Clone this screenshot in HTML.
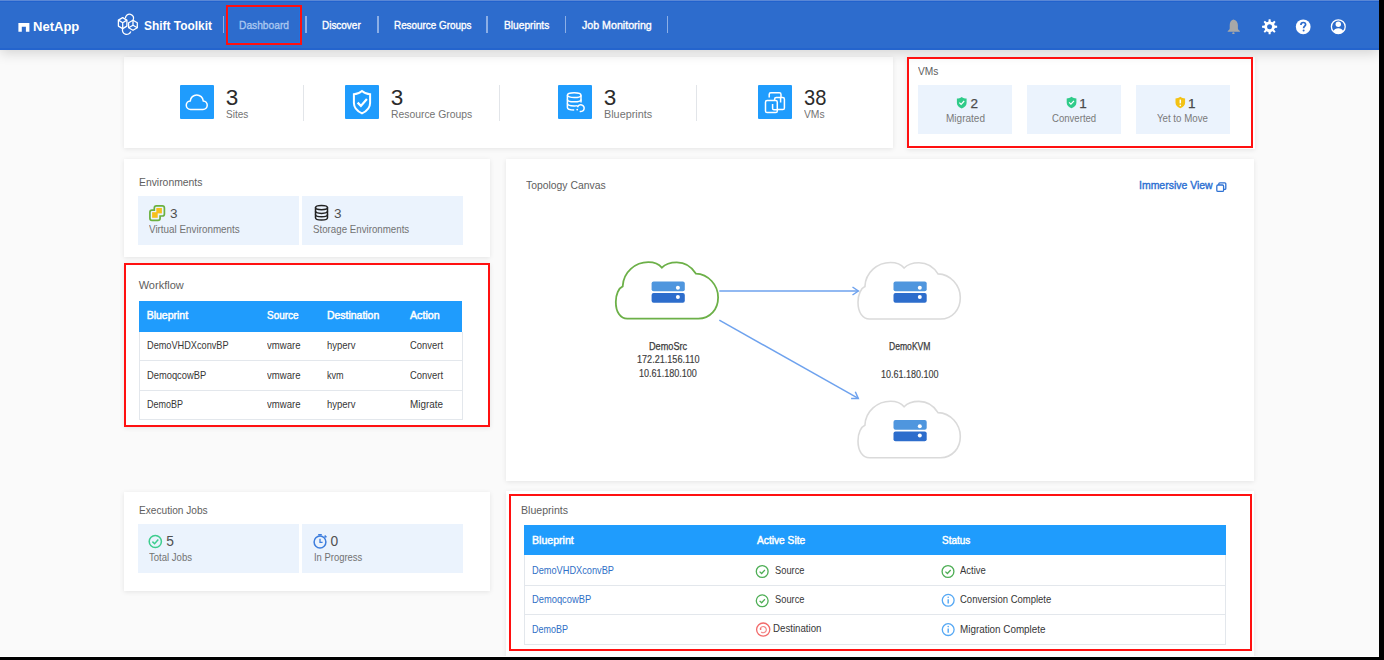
<!DOCTYPE html>
<html><head><meta charset="utf-8">
<style>
*{box-sizing:border-box;margin:0;padding:0}
html,body{width:1384px;height:660px;overflow:hidden;background:#000;font-family:"Liberation Sans",sans-serif}
#page{position:absolute;left:0;top:0;width:1379px;height:657px;background:#fafafa;overflow:hidden}
.tx{position:absolute;white-space:nowrap;transform-origin:0 0}
#nav{position:absolute;left:0;top:0;width:1379px;height:50px;background:#2d6ccd;box-shadow:inset 0 -2px 0 #2464cd,0 3px 12px rgba(0,0,0,.16)}
#nav .top{position:absolute;left:0;top:0;width:100%;height:1px;background:#5a87d5;box-shadow:0 1px 0 #2262cd}
.sep{position:absolute;top:16px;width:1.5px;height:17px;background:#8cafe6}
.redbox{position:absolute;border:2px solid #ff1010}
.card{position:absolute;background:#fff;box-shadow:0 1px 5px rgba(0,0,0,.09)}
.sq{position:absolute;width:34px;height:34px;background:#1f9cfd;border-radius:1px}
.sq svg{position:absolute;left:0;top:0}
.vdiv{position:absolute;width:1px;background:#e2e5e9}
.lbox{position:absolute;background:#ebf3fd}
.tbl{position:absolute;border:1px solid #e3e7ec;border-top:none;background:#fff}
.thead{position:absolute;background:#1f9cfd}
.rowb{position:absolute;height:1px;background:#e3e7ec}
svg{position:absolute;overflow:visible}
</style></head><body>
<div id="page">
  <!-- ============ CARDS ============ -->
  <div class="card" style="left:124px;top:57px;width:769px;height:91px"></div>
  <div class="card" style="left:906.5px;top:57px;width:348.5px;height:91.5px"></div>
  <div class="card" style="left:124px;top:159px;width:366px;height:98px"></div>
  <div class="card" style="left:124px;top:263px;width:366px;height:164px"></div>
  <div class="card" style="left:506px;top:159px;width:748px;height:322px"></div>
  <div class="card" style="left:124px;top:492px;width:366px;height:99px"></div>
  <div class="card" style="left:506px;top:491px;width:748px;height:170px"></div>

  <!-- ============ NAV ============ -->
  <div id="nav">
    <div class="top"></div>
    <!-- NetApp logo mark -->
    <svg style="left:0;top:0" width="40" height="50"><path d="M18.4 23 H29.4 V31.7 H25.9 V26.8 H21.8 V31.7 H18.4 Z" fill="#fff"/></svg>
    <!-- Shift toolkit logo -->
    <svg style="left:0;top:0" width="140" height="50" fill="none" stroke="#fff" stroke-width="1.3" stroke-linejoin="round">
      <path d="M125.4 18.2 A4.1 4.1 0 1 1 133.1 20.2"/>
      <path d="M122.7 28.6 A4.3 4.3 0 1 0 130.8 31.6"/>
      <path d="M122.7 17.6 L126.9 20.1 V26.1 L122.7 28.6 L118.4 26.1 V20.1 Z"/>
      <path d="M118.4 20.1 L122.7 22.7 L126.9 20.1 M122.7 22.7 V28.6"/>
      <path d="M133 20.2 L137.3 22.7 V27.8 L133 30.3 L128.6 27.8 V22.7 Z"/>
      <path d="M133 20.2 V25.3 L128.6 27.8 M133 25.3 L137.3 27.8"/>
    </svg>
    <div class="sep" style="left:222.8px"></div>
    <div class="redbox" style="left:226px;top:5px;width:76px;height:40px;box-shadow:inset 0 0 0 1px rgba(20,120,240,.55)"></div>
    <div class="sep" style="left:305.2px"></div>
    <div class="sep" style="left:377.4px"></div>
    <div class="sep" style="left:486.3px"></div>
    <div class="sep" style="left:564.8px"></div>
    <div class="sep" style="left:666.8px"></div>
    <!-- bell -->
    <svg style="left:0;top:0" width="1379" height="50">
      <path d="M1233.4 19.5 C1230.9 20.3 1229.7 22.3 1229.7 25.2 V28.4 C1229.7 29.5 1228.4 30.2 1227.7 30.9 V31.7 H1239.9 V30.9 C1239.2 30.2 1237.9 29.5 1237.9 28.4 V25.2 C1237.9 22.3 1236.3 20.3 1233.4 19.5 Z" fill="#a8a8a8"/>
      <ellipse cx="1233.4" cy="33.2" rx="1.2" ry="0.9" fill="#a8a8a8"/>
      <!-- gear -->
      <path d="M1267.69 22.18 L1268.39 21.95 L1268.67 19.26 L1270.53 19.26 L1270.81 21.95 L1271.51 22.18 L1272.18 22.51 L1274.28 20.81 L1275.59 22.12 L1273.89 24.22 L1274.22 24.89 L1274.45 25.59 L1277.14 25.87 L1277.14 27.73 L1274.45 28.01 L1274.22 28.71 L1273.89 29.38 L1275.59 31.48 L1274.28 32.79 L1272.18 31.09 L1271.51 31.42 L1270.81 31.65 L1270.53 34.34 L1268.67 34.34 L1268.39 31.65 L1267.69 31.42 L1267.02 31.09 L1264.92 32.79 L1263.61 31.48 L1265.31 29.38 L1264.98 28.71 L1264.75 28.01 L1262.06 27.73 L1262.06 25.87 L1264.75 25.59 L1264.98 24.89 L1265.31 24.22 L1263.61 22.12 L1264.92 20.81 L1267.02 22.51 Z" fill="#fff"/>
      <circle cx="1269.6" cy="26.8" r="5.2" fill="#fff"/>
      <circle cx="1269.6" cy="26.8" r="2.5" fill="#2d6ccd"/>
      <!-- help -->
      <circle cx="1303.2" cy="26.8" r="7.4" fill="#fff"/>
      <path d="M1300.9 24.9 C1300.9 23.4 1301.9 22.5 1303.3 22.5 C1304.7 22.5 1305.6 23.4 1305.6 24.6 C1305.6 26.2 1303.6 26.3 1303.6 28.2" fill="none" stroke="#2d6ccd" stroke-width="1.7"/>
      <circle cx="1303.6" cy="30.6" r="1" fill="#2d6ccd"/>
      <!-- user -->
      <circle cx="1338.3" cy="26.7" r="6.9" fill="none" stroke="#fff" stroke-width="1.3"/>
      <circle cx="1338.3" cy="24.3" r="2.7" fill="#fff"/>
      <path d="M1333.2 31.3 C1334.2 29.2 1336 28.3 1338.3 28.3 C1340.6 28.3 1342.4 29.2 1343.4 31.3 C1342.1 32.7 1340.3 33.6 1338.3 33.6 C1336.3 33.6 1334.5 32.7 1333.2 31.3 Z" fill="#fff"/>
    </svg>
  </div>

  <!-- ============ STATS ============ -->
  <div class="sq" style="left:180px;top:85px">
    <svg width="34" height="34"><path d="M10.5 24.5 A4.3 4.3 0 0 1 10.27 15.91 A6.5 6.5 0 0 1 23.23 15.91 A4.3 4.3 0 0 1 23 24.5 Z" fill="none" stroke="#fff" stroke-width="1.5"/></svg>
  </div>
  <div class="vdiv" style="left:303px;top:85px;height:36px"></div>
  <div class="sq" style="left:344.5px;top:85px">
    <svg width="34" height="34" fill="none" stroke="#fff"><path d="M17 6 C14.6 8.1 11.6 9.2 8.9 9.2 V18 C8.9 23 12.8 26.4 17 28.3 C21.2 26.4 25.1 23 25.1 18 V9.2 C22.4 9.2 19.4 8.1 17 6 Z" stroke-width="2"/><path d="M12.6 17.6 L15.9 20.9 L21.9 14" stroke-width="2.2"/></svg>
  </div>
  <div class="vdiv" style="left:499px;top:85px;height:36px"></div>
  <div class="sq" style="left:557.5px;top:85px">
    <svg width="34" height="34" fill="none" stroke="#fff" stroke-width="1.5">
      <ellipse cx="16.2" cy="10.2" rx="6.8" ry="2.4"/>
      <path d="M9.4 10.2 V22.6 C9.4 24 12.4 25.1 16.2 25.1 M23 10.2 V17.6"/>
      <path d="M9.4 14.4 C9.4 15.8 12.4 16.8 16.2 16.8 C20 16.8 23 15.8 23 14.4"/>
      <path d="M9.4 18.6 C9.4 20 12.4 21 16.2 21 C17.5 21 18.6 20.9 19.6 20.6"/>
      <path d="M19.5 22.2 A3.4 3.4 0 1 1 21.7 26.4" stroke-width="1.5"/>
      <circle cx="19.2" cy="24.6" r="0.9" fill="#fff" stroke="none"/>
    </svg>
  </div>
  <div class="vdiv" style="left:695.5px;top:85px;height:36px"></div>
  <div class="sq" style="left:757.5px;top:85px">
    <svg width="34" height="34" fill="none" stroke="#fff" stroke-width="1.5">
      <path d="M11.2 12.6 V9.4 A1.6 1.6 0 0 1 12.8 7.8 H21.4 A1.6 1.6 0 0 1 23 9.4 V12.6"/>
      <rect x="16.6" y="12.6" width="9.8" height="12" rx="1.6"/>
      <path d="M22.6 12.6 V17.5"/>
      <rect x="7.5" y="15.6" width="11.8" height="12" rx="1.6" fill="#1f9cfd"/>
      <path d="M14.6 19 V23.4 A1.4 1.4 0 0 0 16 24.8 H19.3"/>
    </svg>
  </div>

  <!-- ============ VMs card ============ -->
  <div class="redbox" style="left:906.5px;top:57px;width:346.5px;height:90.5px"></div>
  <div class="lbox" style="left:918.2px;top:85px;width:94px;height:49.2px"></div>
  <div class="lbox" style="left:1027.2px;top:85px;width:94px;height:49.2px"></div>
  <div class="lbox" style="left:1135.8px;top:85px;width:94px;height:49.2px"></div>
  <svg style="left:0;top:0" width="1300" height="150">
    <path d="M961.7 97 C960.2 98.2 958.6 98.6 956.9 98.6 V103 C956.9 105.6 958.8 107.4 961.7 108.4 C964.6 107.4 966.6 105.6 966.6 103 V98.6 C964.8 98.6 963.2 98.2 961.7 97 Z" fill="#2fcb89"/>
    <path d="M959.3 102.6 L961.1 104.3 L964.2 101" fill="none" stroke="#fff" stroke-width="1.2"/>
    <path d="M1071.5 96.8 C1070 98 1068.4 98.4 1066.7 98.4 V102.8 C1066.7 105.4 1068.6 107.2 1071.5 108.2 C1074.4 107.2 1076.4 105.4 1076.4 102.8 V98.4 C1074.6 98.4 1073 98 1071.5 96.8 Z" fill="#2fcb89"/>
    <path d="M1069.1 102.4 L1070.9 104.1 L1074 100.8" fill="none" stroke="#fff" stroke-width="1.2"/>
    <path d="M1180.3 96.8 C1178.8 98 1177.2 98.4 1175.5 98.4 V102.8 C1175.5 105.4 1177.4 107.2 1180.3 108.2 C1183.2 107.2 1185.1 105.4 1185.1 102.8 V98.4 C1183.4 98.4 1181.8 98 1180.3 96.8 Z" fill="#f3c214"/>
    <path d="M1180.3 99.6 V103.4" fill="none" stroke="#fff" stroke-width="1.5"/>
    <circle cx="1180.3" cy="105.4" r=".8" fill="#fff"/>
  </svg>

  <!-- ============ Environments ============ -->
  <div class="lbox" style="left:138.2px;top:196px;width:161px;height:49.2px"></div>
  <div class="lbox" style="left:302.3px;top:196px;width:161.2px;height:49.2px"></div>
  <svg style="left:0;top:0" width="500" height="260">
    <rect x="156.3" y="208" width="5.6" height="5.4" fill="#f6c01b"/>
    <rect x="152.1" y="212.2" width="5.6" height="5.6" fill="#f6c01b"/>
    <path d="M156.4 205.9 H162.3 Q164.4 205.9 164.4 208 V213.9 Q164.4 216 162.3 216 H160.1 V218.2 Q160.1 220.3 158 220.3 H152 Q149.9 220.3 149.9 218.2 V212.2 Q149.9 210.1 152 210.1 H154.3 V208 Q154.3 205.9 156.4 205.9 Z" fill="none" stroke="#6bb13f" stroke-width="1.7"/>
    <g fill="none" stroke="#222" stroke-width="1.5">
      <ellipse cx="321.5" cy="207.6" rx="6" ry="2.2"/>
      <path d="M315.5 207.6 V217.8 C315.5 219.1 318.2 220.1 321.5 220.1 C324.8 220.1 327.5 219.1 327.5 217.8 V207.6"/>
      <path d="M315.5 211.1 C315.5 212.4 318.2 213.4 321.5 213.4 C324.8 213.4 327.5 212.4 327.5 211.1"/>
      <path d="M315.5 214.5 C315.5 215.8 318.2 216.8 321.5 216.8 C324.8 216.8 327.5 215.8 327.5 214.5"/>
    </g>
  </svg>

  <!-- ============ Workflow ============ -->
  <div class="redbox" style="left:123.5px;top:262.7px;width:366px;height:164px"></div>
  <div class="thead" style="left:139.2px;top:300.6px;width:323.2px;height:31px"></div>
  <div class="tbl" style="left:139.2px;top:331.5px;width:323.4px;height:88.5px"></div>
  <div class="rowb" style="left:139.2px;top:360.2px;width:323.4px"></div>
  <div class="rowb" style="left:139.2px;top:390px;width:323.4px"></div>

  <!-- ============ Topology ============ -->
  <svg style="left:0;top:0" width="1300" height="480">
    
    <path transform="translate(615.3 262)" d="M12 56.7 C5 56.7 0.5 50 0.5 40 C0.5 32 3.5 26 7.4 24.3 C8 10 20 0.2 33 0.2 C39 0.2 44 2.5 46.6 5.7 C50 2 56 0.4 61.5 0.4 C71 0.4 77 6 80.5 11.6 C93 12 102.8 23 102.8 35.4 C102.8 47 95 56.7 83 56.7 Z" fill="none" stroke="#6cb048" stroke-width="1.8"/>
    <path transform="translate(857.5 262.3)" d="M12 56.7 C5 56.7 0.5 50 0.5 40 C0.5 32 3.5 26 7.4 24.3 C8 10 20 0.2 33 0.2 C39 0.2 44 2.5 46.6 5.7 C50 2 56 0.4 61.5 0.4 C71 0.4 77 6 80.5 11.6 C93 12 102.8 23 102.8 35.4 C102.8 47 95 56.7 83 56.7 Z" fill="none" stroke="#dadada" stroke-width="1.6"/>
    <path transform="translate(857.5 401)" d="M12 56.7 C5 56.7 0.5 50 0.5 40 C0.5 32 3.5 26 7.4 24.3 C8 10 20 0.2 33 0.2 C39 0.2 44 2.5 46.6 5.7 C50 2 56 0.4 61.5 0.4 C71 0.4 77 6 80.5 11.6 C93 12 102.8 23 102.8 35.4 C102.8 47 95 56.7 83 56.7 Z" fill="none" stroke="#dadada" stroke-width="1.6"/>
    <g transform="translate(651.6 281.5)"><rect x="0" y="0" width="33.2" height="9.7" rx="2" fill="#4f96de"/><rect x="0" y="11.6" width="33.2" height="9.6" rx="2" fill="#2d6dcc"/><circle cx="26.3" cy="6.2" r="2" fill="#fff"/><circle cx="26.3" cy="15.4" r="2" fill="#fff"/></g>
    <g transform="translate(893.5 281.5)"><rect x="0" y="0" width="33.2" height="9.7" rx="2" fill="#4f96de"/><rect x="0" y="11.6" width="33.2" height="9.6" rx="2" fill="#2d6dcc"/><circle cx="26.3" cy="6.2" r="2" fill="#fff"/><circle cx="26.3" cy="15.4" r="2" fill="#fff"/></g>
    <g transform="translate(893.5 420)"><rect x="0" y="0" width="33.2" height="9.7" rx="2" fill="#4f96de"/><rect x="0" y="11.6" width="33.2" height="9.6" rx="2" fill="#2d6dcc"/><circle cx="26.3" cy="6.2" r="2" fill="#fff"/><circle cx="26.3" cy="15.4" r="2" fill="#fff"/></g>
    <g stroke="#6ea2ee" stroke-width="1.5" fill="none">
      <path d="M719.3 291 H858.3"/>
      <path d="M852.5 287 L858.3 291 L852.5 295"/>
      <path d="M719.3 320.2 L858.3 398.4"/>
      <path d="M851.1 398.4 L858.3 398.4 L855.3 391.8"/>
    </g>
    <!-- immersive icon -->
    <g fill="none" stroke="#2f72d3" stroke-width="1.3">
      <rect x="1216.8" y="185" width="6.8" height="6.4" rx="1.2"/>
      <path d="M1218.8 185 V183.8 A1 1 0 0 1 1219.8 182.8 H1224.8 A1 1 0 0 1 1225.8 183.8 V188.4 A1 1 0 0 1 1224.8 189.4 H1223.6"/>
    </g>
  </svg>

  <!-- ============ Execution Jobs ============ -->
  <div class="lbox" style="left:138.2px;top:524px;width:160.8px;height:48.6px"></div>
  <div class="lbox" style="left:302.3px;top:524px;width:161px;height:48.6px"></div>
  <svg style="left:0;top:0" width="500" height="600" fill="none">
    <circle cx="155.3" cy="541.5" r="6.1" stroke="#3dcd8e" stroke-width="1.5"/>
    <path d="M152.4 541.6 L154.6 543.7 L158.3 539.6" stroke="#3dcd8e" stroke-width="1.5"/>
    <circle cx="320" cy="542" r="5.9" stroke="#3d7ddd" stroke-width="1.5"/>
    <path d="M320 538.8 V542.4 H322.6" stroke="#3d7ddd" stroke-width="1.3"/>
    <path d="M318.2 534.8 H321.8 M324.6 535.6 L326.4 537.4" stroke="#3d7ddd" stroke-width="1.5"/>
  </svg>

  <!-- ============ Blueprints ============ -->
  <div class="redbox" style="left:508.5px;top:494.4px;width:743.7px;height:156.8px"></div>
  <div class="thead" style="left:524px;top:524.8px;width:701.8px;height:30.5px"></div>
  <div class="tbl" style="left:524px;top:555.3px;width:701.8px;height:89.4px"></div>
  <div class="rowb" style="left:524px;top:584.8px;width:701.8px"></div>
  <div class="rowb" style="left:524px;top:614.4px;width:701.8px"></div>
  <svg style="left:0;top:0" width="1300" height="660" fill="none">
    <g stroke="#4eae55" stroke-width="1.3">
      <circle cx="762.2" cy="571.5" r="5.9"/><path d="M759.6 571.6 L761.6 573.5 L764.9 570"/>
      <circle cx="762.2" cy="600.8" r="5.9"/><path d="M759.6 600.9 L761.6 602.8 L764.9 599.3"/>
      <circle cx="948" cy="571.5" r="5.9"/><path d="M945.4 571.6 L947.4 573.5 L950.7 570"/>
    </g>
    <g stroke="#f26a6a" stroke-width="1.3">
      <circle cx="763.2" cy="629.6" r="6.6"/>
      <path d="M760.3 628.5 A3.1 3.1 0 1 1 761.2 632" stroke="#f48a8a" stroke-width="1.2"/>
      <circle cx="760.6" cy="629" r="0.9" fill="#f26a6a" stroke="none"/>
    </g>
    <g stroke="#55a8f4" stroke-width="1.3">
      <circle cx="948.2" cy="600.3" r="5.9"/>
      <circle cx="948.2" cy="629.6" r="5.9"/>
      <path d="M948.2 599.2 V603.4 M948.2 628.5 V632.7" stroke-width="1.4"/>
    </g>
    <circle cx="948.2" cy="597.3" r=".8" fill="#55a8f4"/>
    <circle cx="948.2" cy="626.6" r=".8" fill="#55a8f4"/>
  </svg>

  <span class="tx" style="left:33.10px;top:21.10px;font-size:12px;line-height:12px;font-weight:700;color:#ffffff;transform:scaleX(1.0850);">NetApp</span>
<span class="tx" style="left:144.20px;top:19.33px;font-size:13.5px;line-height:13.5px;font-weight:700;color:#ffffff;transform:scaleX(0.8831);">Shift Toolkit</span>
<span class="tx" style="left:239.00px;top:19.65px;font-size:11px;line-height:11px;font-weight:400;color:#a9c7f0;transform:scaleX(0.9289);-webkit-text-stroke:0.35px currentColor;">Dashboard</span>
<span class="tx" style="left:322.40px;top:19.75px;font-size:11px;line-height:11px;font-weight:400;color:#ffffff;transform:scaleX(0.9043);-webkit-text-stroke:0.35px currentColor;">Discover</span>
<span class="tx" style="left:394.00px;top:19.75px;font-size:11px;line-height:11px;font-weight:400;color:#ffffff;transform:scaleX(0.8977);-webkit-text-stroke:0.35px currentColor;">Resource Groups</span>
<span class="tx" style="left:503.80px;top:19.75px;font-size:11px;line-height:11px;font-weight:400;color:#ffffff;transform:scaleX(0.9260);-webkit-text-stroke:0.35px currentColor;">Blueprints</span>
<span class="tx" style="left:581.90px;top:19.75px;font-size:11px;line-height:11px;font-weight:400;color:#ffffff;transform:scaleX(0.9673);-webkit-text-stroke:0.35px currentColor;">Job Monitoring</span>
<span class="tx" style="left:225.80px;top:86.97px;font-size:22.5px;line-height:22.5px;font-weight:400;color:#2b2b2b;">3</span>
<span class="tx" style="left:225.70px;top:109.02px;font-size:11.5px;line-height:11.5px;font-weight:400;color:#737373;transform:scaleX(0.8718);">Sites</span>
<span class="tx" style="left:390.80px;top:86.97px;font-size:22.5px;line-height:22.5px;font-weight:400;color:#2b2b2b;">3</span>
<span class="tx" style="left:390.80px;top:109.02px;font-size:11.5px;line-height:11.5px;font-weight:400;color:#737373;transform:scaleX(0.9010);">Resource Groups</span>
<span class="tx" style="left:603.70px;top:86.97px;font-size:22.5px;line-height:22.5px;font-weight:400;color:#2b2b2b;">3</span>
<span class="tx" style="left:603.70px;top:109.02px;font-size:11.5px;line-height:11.5px;font-weight:400;color:#737373;transform:scaleX(0.9405);">Blueprints</span>
<span class="tx" style="left:803.60px;top:86.97px;font-size:22.5px;line-height:22.5px;font-weight:400;color:#2b2b2b;transform:scaleX(0.8949);">38</span>
<span class="tx" style="left:803.60px;top:109.02px;font-size:11.5px;line-height:11.5px;font-weight:400;color:#737373;transform:scaleX(0.8957);">VMs</span>
<span class="tx" style="left:918.20px;top:65.67px;font-size:10.5px;line-height:10.5px;font-weight:400;color:#5e5e5e;transform:scaleX(0.9714);">VMs</span>
<span class="tx" style="left:970.50px;top:96.83px;font-size:13.5px;line-height:13.5px;font-weight:400;color:#4a4a4a;-webkit-text-stroke:0.25px currentColor;">2</span>
<span class="tx" style="left:945.50px;top:112.88px;font-size:10.5px;line-height:10.5px;font-weight:400;color:#7a7a7a;transform:scaleX(0.9545);">Migrated</span>
<span class="tx" style="left:1079.20px;top:96.83px;font-size:13.5px;line-height:13.5px;font-weight:400;color:#4a4a4a;-webkit-text-stroke:0.25px currentColor;">1</span>
<span class="tx" style="left:1051.80px;top:112.98px;font-size:10.5px;line-height:10.5px;font-weight:400;color:#7a7a7a;transform:scaleX(0.9122);">Converted</span>
<span class="tx" style="left:1188.00px;top:96.83px;font-size:13.5px;line-height:13.5px;font-weight:400;color:#4a4a4a;-webkit-text-stroke:0.25px currentColor;">1</span>
<span class="tx" style="left:1157.00px;top:112.98px;font-size:10.5px;line-height:10.5px;font-weight:400;color:#7a7a7a;transform:scaleX(0.9241);">Yet to Move</span>
<span class="tx" style="left:139.00px;top:177.27px;font-size:10.5px;line-height:10.5px;font-weight:400;color:#5e5e5e;transform:scaleX(0.9875);">Environments</span>
<span class="tx" style="left:170.00px;top:206.93px;font-size:13.5px;line-height:13.5px;font-weight:400;color:#505050;">3</span>
<span class="tx" style="left:149.30px;top:223.77px;font-size:10.5px;line-height:10.5px;font-weight:400;color:#727272;transform:scaleX(0.9381);">Virtual Environments</span>
<span class="tx" style="left:334.00px;top:206.93px;font-size:13.5px;line-height:13.5px;font-weight:400;color:#505050;">3</span>
<span class="tx" style="left:313.20px;top:223.77px;font-size:10.5px;line-height:10.5px;font-weight:400;color:#727272;transform:scaleX(0.9260);">Storage Environments</span>
<span class="tx" style="left:138.70px;top:280.45px;font-size:11px;line-height:11px;font-weight:400;color:#5e5e5e;">Workflow</span>
<span class="tx" style="left:146.70px;top:309.88px;font-size:10.5px;line-height:10.5px;font-weight:400;color:#ffffff;-webkit-text-stroke:0.45px #fff;">Blueprint</span>
<span class="tx" style="left:266.90px;top:309.88px;font-size:10.5px;line-height:10.5px;font-weight:400;color:#ffffff;transform:scaleX(0.9465);-webkit-text-stroke:0.45px #fff;">Source</span>
<span class="tx" style="left:327.00px;top:309.88px;font-size:10.5px;line-height:10.5px;font-weight:400;color:#ffffff;transform:scaleX(0.9937);-webkit-text-stroke:0.45px #fff;">Destination</span>
<span class="tx" style="left:410.10px;top:309.88px;font-size:10.5px;line-height:10.5px;font-weight:400;color:#ffffff;transform:scaleX(1.0141);-webkit-text-stroke:0.45px #fff;">Action</span>
<span class="tx" style="left:146.70px;top:340.38px;font-size:10.5px;line-height:10.5px;font-weight:400;color:#363636;transform:scaleX(0.8739);">DemoVHDXconvBP</span>
<span class="tx" style="left:266.90px;top:340.38px;font-size:10.5px;line-height:10.5px;font-weight:400;color:#363636;transform:scaleX(0.9112);">vmware</span>
<span class="tx" style="left:327.00px;top:340.38px;font-size:10.5px;line-height:10.5px;font-weight:400;color:#363636;transform:scaleX(0.9043);">hyperv</span>
<span class="tx" style="left:410.10px;top:340.38px;font-size:10.5px;line-height:10.5px;font-weight:400;color:#363636;transform:scaleX(0.8976);">Convert</span>
<span class="tx" style="left:146.70px;top:369.88px;font-size:10.5px;line-height:10.5px;font-weight:400;color:#363636;transform:scaleX(0.8898);">DemoqcowBP</span>
<span class="tx" style="left:266.90px;top:369.88px;font-size:10.5px;line-height:10.5px;font-weight:400;color:#363636;transform:scaleX(0.9112);">vmware</span>
<span class="tx" style="left:327.00px;top:369.88px;font-size:10.5px;line-height:10.5px;font-weight:400;color:#363636;transform:scaleX(0.8675);">kvm</span>
<span class="tx" style="left:410.10px;top:369.88px;font-size:10.5px;line-height:10.5px;font-weight:400;color:#363636;transform:scaleX(0.8976);">Convert</span>
<span class="tx" style="left:146.70px;top:399.47px;font-size:10.5px;line-height:10.5px;font-weight:400;color:#363636;transform:scaleX(0.8568);">DemoBP</span>
<span class="tx" style="left:266.90px;top:399.47px;font-size:10.5px;line-height:10.5px;font-weight:400;color:#363636;transform:scaleX(0.9112);">vmware</span>
<span class="tx" style="left:327.00px;top:399.47px;font-size:10.5px;line-height:10.5px;font-weight:400;color:#363636;transform:scaleX(0.9043);">hyperv</span>
<span class="tx" style="left:410.10px;top:399.47px;font-size:10.5px;line-height:10.5px;font-weight:400;color:#363636;transform:scaleX(0.9424);">Migrate</span>
<span class="tx" style="left:526.10px;top:179.75px;font-size:11px;line-height:11px;font-weight:400;color:#5e5e5e;transform:scaleX(0.9432);">Topology Canvas</span>
<span class="tx" style="left:1139.00px;top:179.75px;font-size:11px;line-height:11px;font-weight:400;color:#2c70d2;transform:scaleX(0.9517);-webkit-text-stroke:0.4px currentColor;">Immersive View</span>
<span class="tx" style="left:648.60px;top:341.70px;font-size:10px;line-height:10px;font-weight:400;color:#3c3c3c;transform:scaleX(0.9163);-webkit-text-stroke:0.25px currentColor;">DemoSrc</span>
<span class="tx" style="left:636.80px;top:355.40px;font-size:10px;line-height:10px;font-weight:400;color:#3c3c3c;transform:scaleX(0.9087);-webkit-text-stroke:0.15px currentColor;">172.21.156.110</span>
<span class="tx" style="left:639.10px;top:369.00px;font-size:10px;line-height:10px;font-weight:400;color:#3c3c3c;transform:scaleX(0.9054);-webkit-text-stroke:0.15px currentColor;">10.61.180.100</span>
<span class="tx" style="left:888.50px;top:342.20px;font-size:10px;line-height:10px;font-weight:400;color:#3c3c3c;transform:scaleX(0.8582);-webkit-text-stroke:0.25px currentColor;">DemoKVM</span>
<span class="tx" style="left:880.70px;top:369.60px;font-size:10px;line-height:10px;font-weight:400;color:#3c3c3c;transform:scaleX(0.9007);-webkit-text-stroke:0.15px currentColor;">10.61.180.100</span>
<span class="tx" style="left:138.80px;top:505.37px;font-size:10.5px;line-height:10.5px;font-weight:400;color:#5e5e5e;transform:scaleX(0.9646);">Execution Jobs</span>
<span class="tx" style="left:166.20px;top:534.77px;font-size:13.8px;line-height:13.8px;font-weight:400;color:#505050;">5</span>
<span class="tx" style="left:149.20px;top:552.18px;font-size:10.5px;line-height:10.5px;font-weight:400;color:#727272;transform:scaleX(0.9095);">Total Jobs</span>
<span class="tx" style="left:330.60px;top:534.77px;font-size:13.8px;line-height:13.8px;font-weight:400;color:#505050;">0</span>
<span class="tx" style="left:313.60px;top:552.18px;font-size:10.5px;line-height:10.5px;font-weight:400;color:#727272;transform:scaleX(0.8975);">In Progress</span>
<span class="tx" style="left:520.90px;top:505.18px;font-size:10.5px;line-height:10.5px;font-weight:400;color:#5e5e5e;transform:scaleX(1.0064);">Blueprints</span>
<span class="tx" style="left:531.50px;top:534.78px;font-size:10.5px;line-height:10.5px;font-weight:400;color:#ffffff;transform:scaleX(1.0084);-webkit-text-stroke:0.45px #fff;">Blueprint</span>
<span class="tx" style="left:756.80px;top:534.78px;font-size:10.5px;line-height:10.5px;font-weight:400;color:#ffffff;transform:scaleX(0.9716);-webkit-text-stroke:0.45px #fff;">Active Site</span>
<span class="tx" style="left:941.90px;top:534.78px;font-size:10.5px;line-height:10.5px;font-weight:400;color:#ffffff;transform:scaleX(0.9469);-webkit-text-stroke:0.45px #fff;">Status</span>
<span class="tx" style="left:531.50px;top:565.18px;font-size:10.5px;line-height:10.5px;font-weight:400;color:#2f6fc6;transform:scaleX(0.8782);">DemoVHDXconvBP</span>
<span class="tx" style="left:774.60px;top:565.18px;font-size:10.5px;line-height:10.5px;font-weight:400;color:#363636;transform:scaleX(0.8864);">Source</span>
<span class="tx" style="left:960.10px;top:565.18px;font-size:10.5px;line-height:10.5px;font-weight:400;color:#363636;transform:scaleX(0.9023);">Active</span>
<span class="tx" style="left:531.50px;top:594.48px;font-size:10.5px;line-height:10.5px;font-weight:400;color:#2f6fc6;transform:scaleX(0.8898);">DemoqcowBP</span>
<span class="tx" style="left:774.60px;top:594.48px;font-size:10.5px;line-height:10.5px;font-weight:400;color:#363636;transform:scaleX(0.8864);">Source</span>
<span class="tx" style="left:960.10px;top:594.48px;font-size:10.5px;line-height:10.5px;font-weight:400;color:#363636;transform:scaleX(0.9042);">Conversion Complete</span>
<span class="tx" style="left:531.50px;top:623.68px;font-size:10.5px;line-height:10.5px;font-weight:400;color:#2f6fc6;transform:scaleX(0.8568);">DemoBP</span>
<span class="tx" style="left:773.20px;top:623.08px;font-size:10.5px;line-height:10.5px;font-weight:400;color:#363636;transform:scaleX(0.9233);">Destination</span>
<span class="tx" style="left:960.10px;top:623.68px;font-size:10.5px;line-height:10.5px;font-weight:400;color:#363636;transform:scaleX(0.9391);">Migration Complete</span>
  <div style="position:absolute;left:0;top:656px;width:1379px;height:1px;background:#fff"></div>
</div>
</body></html>
